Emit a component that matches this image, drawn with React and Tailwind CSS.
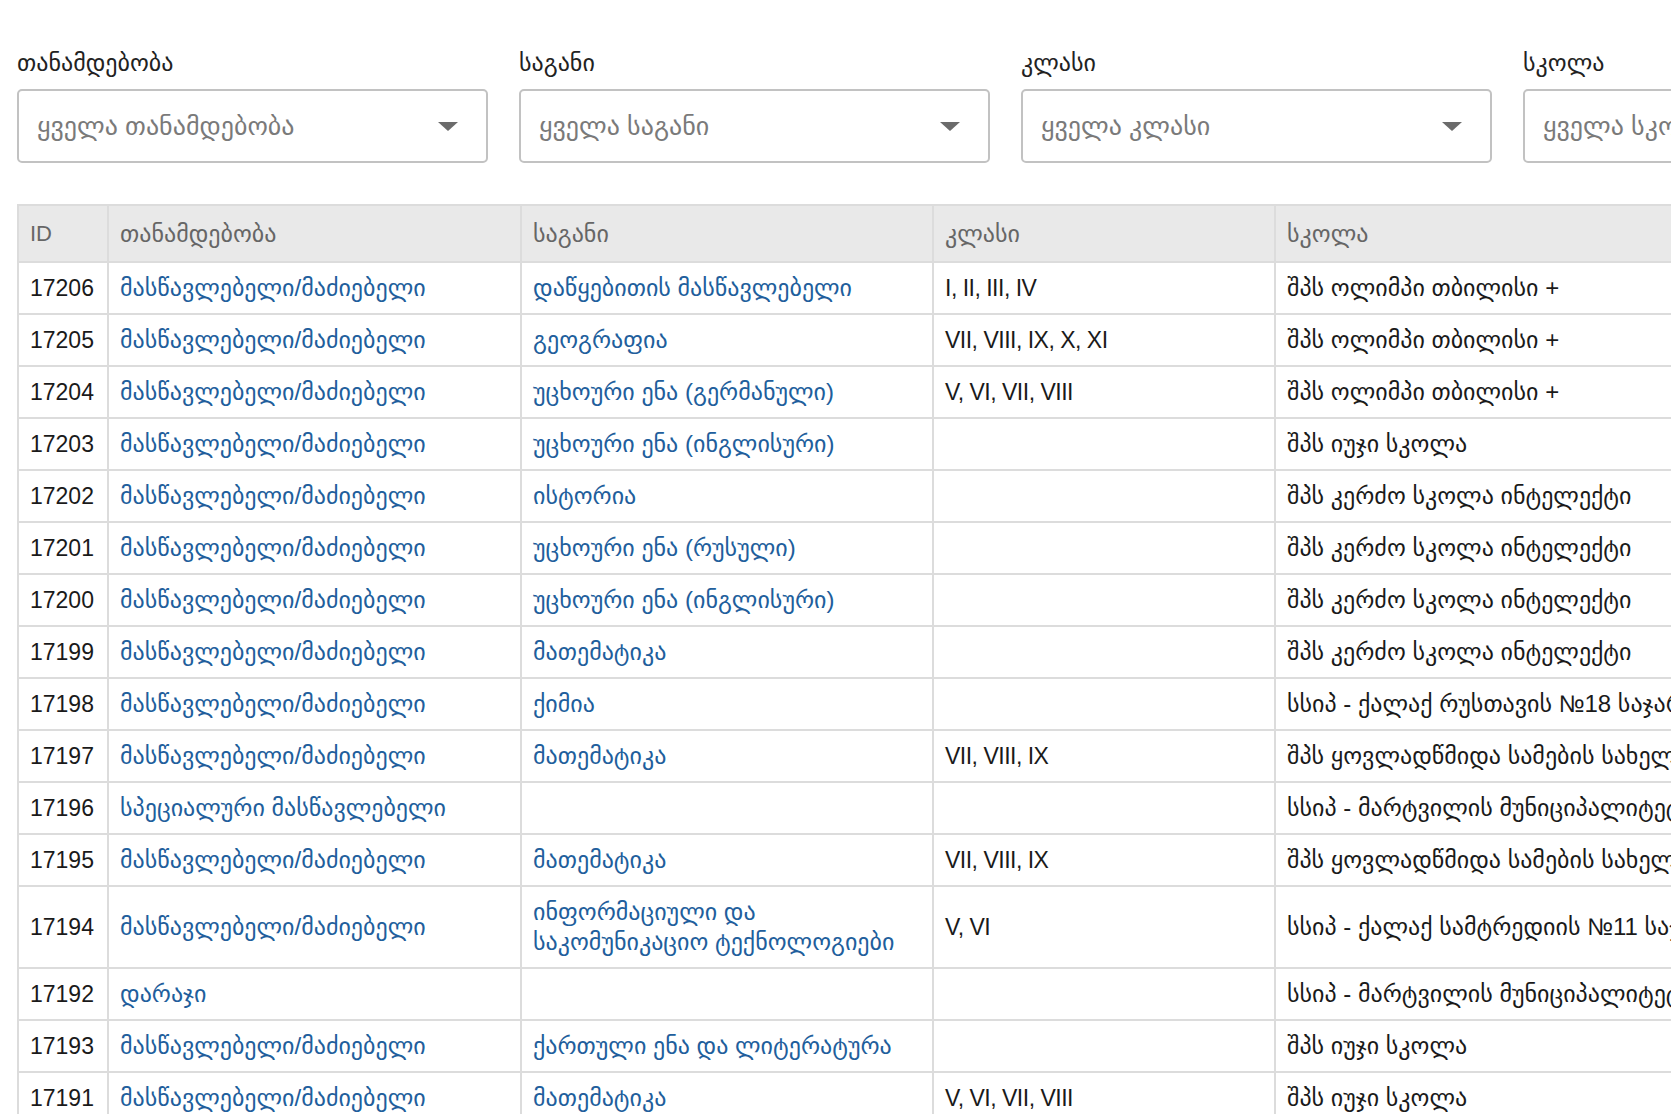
import React from "react";

const filters = [
  { label: "თანამდებობა", placeholder: "ყველა თანამდებობა" },
  { label: "საგანი", placeholder: "ყველა საგანი" },
  { label: "კლასი", placeholder: "ყველა კლასი" },
  { label: "სკოლა", placeholder: "ყველა სკოლა" },
];

const T = "მასწავლებელი/მაძიებელი";

const rows = [
  [17206, T, "დაწყებითის მასწავლებელი", "I, II, III, IV", "შპს ოლიმპი თბილისი +"],
  [17205, T, "გეოგრაფია", "VII, VIII, IX, X, XI", "შპს ოლიმპი თბილისი +"],
  [17204, T, "უცხოური ენა (გერმანული)", "V, VI, VII, VIII", "შპს ოლიმპი თბილისი +"],
  [17203, T, "უცხოური ენა (ინგლისური)", "", "შპს იუჯი სკოლა"],
  [17202, T, "ისტორია", "", "შპს კერძო სკოლა ინტელექტი"],
  [17201, T, "უცხოური ენა (რუსული)", "", "შპს კერძო სკოლა ინტელექტი"],
  [17200, T, "უცხოური ენა (ინგლისური)", "", "შპს კერძო სკოლა ინტელექტი"],
  [17199, T, "მათემატიკა", "", "შპს კერძო სკოლა ინტელექტი"],
  [17198, T, "ქიმია", "", "სსიპ - ქალაქ რუსთავის №18 საჯარო სკოლა"],
  [17197, T, "მათემატიკა", "VII, VIII, IX", "შპს ყოვლადწმიდა სამების სახელობის სკოლა"],
  [17196, "სპეციალური მასწავლებელი", "", "", "სსიპ - მარტვილის მუნიციპალიტეტის საჯარო სკოლა"],
  [17195, T, "მათემატიკა", "VII, VIII, IX", "შპს ყოვლადწმიდა სამების სახელობის სკოლა"],
  [17194, T, "ინფორმაციული და საკომუნიკაციო ტექნოლოგიები", "V, VI", "სსიპ - ქალაქ სამტრედიის №11 საჯარო სკოლა"],
  [17192, "დარაჯი", "", "", "სსიპ - მარტვილის მუნიციპალიტეტის საჯარო სკოლა"],
  [17193, T, "ქართული ენა და ლიტერატურა", "", "შპს იუჯი სკოლა"],
  [17191, T, "მათემატიკა", "V, VI, VII, VIII", "შპს იუჯი სკოლა"],
];

const Arrow = () => (
  <svg width="20" height="9" viewBox="0 0 20 9" className="shrink-0">
    <path d="M0 0 H20 L10 9 Z" fill="#6b6b6b" />
  </svg>
);

const cell = "border-2 border-[#dcdcdc] px-[11px] py-[10px] align-middle";

const App = () => {
  return (
    <div
      className="w-full h-screen overflow-hidden bg-white pl-[17px] pt-[48px]"
      style={{ fontFamily: '"Liberation Sans", "DejaVu Sans", sans-serif' }}
    >
      <div className="flex gap-[31px]">
        {filters.map((f) => (
          <div key={f.label} className="w-[471px] shrink-0">
            <div className="text-[24px] leading-[30px] text-[#222] mb-[11px]">{f.label}</div>
            <div className="h-[74px] border-2 border-[#c2c2c2] rounded-[5px] flex items-center justify-between pl-[18px] pr-[28px]">
              <span className="text-[26px] text-[#7a7a7a] whitespace-nowrap">{f.placeholder}</span>
              <Arrow />
            </div>
          </div>
        ))}
      </div>

      <table className="mt-[41px] table-fixed border-collapse text-[24px] leading-[30px] w-[1960px]">
        <colgroup>
          <col className="w-[90px]" />
          <col className="w-[413px]" />
          <col className="w-[412px]" />
          <col className="w-[342px]" />
          <col className="w-[703px]" />
        </colgroup>
        <thead>
          <tr className="bg-[#e9e9e9] text-[#666] h-[57px]">
            <th className="border-2 border-[#dcdcdc] px-[11px] text-left font-normal text-[22px]">ID</th>
            <th className="border-2 border-[#dcdcdc] px-[11px] text-left font-normal">თანამდებობა</th>
            <th className="border-2 border-[#dcdcdc] px-[11px] text-left font-normal">საგანი</th>
            <th className="border-2 border-[#dcdcdc] px-[11px] text-left font-normal">კლასი</th>
            <th className="border-2 border-[#dcdcdc] px-[11px] text-left font-normal">სკოლა</th>
          </tr>
        </thead>
        <tbody>
          {rows.map((r) => (
            <tr key={r[0]}>
              <td className={`${cell} text-[23px] text-[#1a1a1a]`}>{r[0]}</td>
              <td className={`${cell} text-[#215e9c]`}>{r[1]}</td>
              <td className={`${cell} text-[#215e9c]`}>{r[2]}</td>
              <td className={`${cell} text-[23px] tracking-[-0.5px] text-[#1a1a1a]`}>{r[3]}</td>
              <td className={`${cell} text-[#1a1a1a] whitespace-nowrap`}>{r[4]}</td>
            </tr>
          ))}
        </tbody>
      </table>
    </div>
  );
};

export default App;
